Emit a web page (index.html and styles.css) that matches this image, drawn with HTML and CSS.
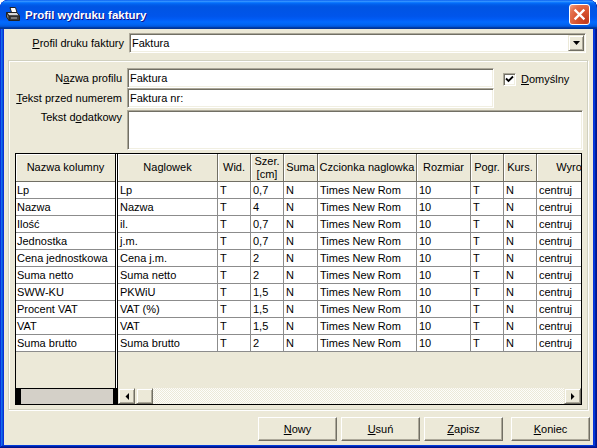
FILE: index.html
```html
<!DOCTYPE html>
<html lang="pl">
<head>
<meta charset="utf-8">
<title>Profil wydruku faktury</title>
<link rel="stylesheet" href="styles.css">
</head>
<body>
<div class="window">
  <div class="titlebar">
    <svg class="title-icon" width="16" height="16" viewBox="0 0 16 16">
      <polygon points="5,0.5 10.5,0.5 12,5.5 6.5,5.5" fill="#fff" stroke="#222" stroke-width="1"/>
      <polygon points="1.5,5.5 12,5.5 14.5,9 4,9" fill="#d8d8d8" stroke="#222" stroke-width="1"/>
      <polygon points="4,9 14.5,9 14.5,13.5 4,13.5" fill="#3a3a3a" stroke="#222" stroke-width="1"/>
      <polygon points="1.5,5.5 4,9 4,13.5 1.5,10" fill="#777" stroke="#222" stroke-width="1"/>
      <rect x="6" y="10.5" width="6" height="1" fill="#bbb"/>
    </svg>
    <span class="title-text">Profil wydruku faktury</span>
    <div class="close-btn">
      <svg width="19" height="19" viewBox="0 0 19 19">
        <path d="M5.5 5.5 L13.5 13.5 M13.5 5.5 L5.5 13.5" stroke="#fff" stroke-width="2.4" stroke-linecap="square"/>
      </svg>
    </div>
  </div>

  <div class="client">
    <div class="profile-row">
      <label class="profile-label"><u>P</u>rofil druku faktury</label>
      <div class="combo">
        <span class="combo-text">Faktura</span>
        <span class="combo-btn">
          <svg width="7" height="4" viewBox="0 0 7 4"><polygon points="0,0 7,0 3.5,4" fill="#000"/></svg>
        </span>
      </div>
    </div>

    <div class="group">
      <div class="form-row">
        <label class="flabel">N<u>a</u>zwa profilu</label>
        <div class="input input-short">Faktura</div>
        <div class="check">
          <span class="check-box">
            <svg width="9" height="9" viewBox="0 0 9 9"><path d="M1 3.5 L3.5 6 L8 1.5" fill="none" stroke="#000" stroke-width="1.8"/></svg>
          </span>
          <span><u>D</u>omyślny</span>
        </div>
      </div>
      <div class="form-row">
        <label class="flabel"><u>T</u>ekst przed numerem</label>
        <div class="input input-short">Faktura nr:</div>
      </div>
      <div class="form-row form-row-tall">
        <label class="flabel flabel-top">Tekst d<u>o</u>datkowy</label>
        <div class="input input-area"></div>
      </div>

      <div class="grid">
        <div class="grid-body">
          <div class="fixed-col">
            <div class="h fh">Nazwa kolumny</div>
            <div class="c fc">Lp</div>
            <div class="c fc">Nazwa</div>
            <div class="c fc">Ilość</div>
            <div class="c fc">Jednostka</div>
            <div class="c fc">Cena jednostkowa</div>
            <div class="c fc">Suma netto</div>
            <div class="c fc">SWW-KU</div>
            <div class="c fc">Procent VAT</div>
            <div class="c fc">VAT</div>
            <div class="c fc">Suma brutto</div>
            <div class="filler"></div>
          </div>
          <div class="divider"></div>
          <div class="scroll-area">
            <div class="cols">
              <div class="h">Naglowek</div>
              <div class="h">Wid.</div>
              <div class="h">Szer.<br>[cm]</div>
              <div class="h">Suma</div>
              <div class="h">Czcionka naglowka</div>
              <div class="h">Rozmiar</div>
              <div class="h">Pogr.</div>
              <div class="h">Kurs.</div>
              <div class="h">Wyrownanie</div>

              <div class="c">Lp</div><div class="c">T</div><div class="c">0,7</div><div class="c">N</div><div class="c">Times New Rom</div><div class="c">10</div><div class="c">T</div><div class="c">N</div><div class="c">centruj</div>
              <div class="c">Nazwa</div><div class="c">T</div><div class="c">4</div><div class="c">N</div><div class="c">Times New Rom</div><div class="c">10</div><div class="c">T</div><div class="c">N</div><div class="c">centruj</div>
              <div class="c">il.</div><div class="c">T</div><div class="c">0,7</div><div class="c">N</div><div class="c">Times New Rom</div><div class="c">10</div><div class="c">T</div><div class="c">N</div><div class="c">centruj</div>
              <div class="c">j.m.</div><div class="c">T</div><div class="c">0,7</div><div class="c">N</div><div class="c">Times New Rom</div><div class="c">10</div><div class="c">T</div><div class="c">N</div><div class="c">centruj</div>
              <div class="c">Cena j.m.</div><div class="c">T</div><div class="c">2</div><div class="c">N</div><div class="c">Times New Rom</div><div class="c">10</div><div class="c">T</div><div class="c">N</div><div class="c">centruj</div>
              <div class="c">Suma netto</div><div class="c">T</div><div class="c">2</div><div class="c">N</div><div class="c">Times New Rom</div><div class="c">10</div><div class="c">T</div><div class="c">N</div><div class="c">centruj</div>
              <div class="c">PKWiU</div><div class="c">T</div><div class="c">1,5</div><div class="c">N</div><div class="c">Times New Rom</div><div class="c">10</div><div class="c">T</div><div class="c">N</div><div class="c">centruj</div>
              <div class="c">VAT (%)</div><div class="c">T</div><div class="c">1,5</div><div class="c">N</div><div class="c">Times New Rom</div><div class="c">10</div><div class="c">T</div><div class="c">N</div><div class="c">centruj</div>
              <div class="c">VAT</div><div class="c">T</div><div class="c">1,5</div><div class="c">N</div><div class="c">Times New Rom</div><div class="c">10</div><div class="c">T</div><div class="c">N</div><div class="c">centruj</div>
              <div class="c">Suma brutto</div><div class="c">T</div><div class="c">2</div><div class="c">N</div><div class="c">Times New Rom</div><div class="c">10</div><div class="c">T</div><div class="c">N</div><div class="c">centruj</div>
            </div>
          </div>
        </div>
        <div class="hscroll">
          <div class="corner"></div>
          <div class="sbar">
            <span class="sbtn">
              <svg width="4" height="7" viewBox="0 0 4 7"><polygon points="4,0 4,7 0.5,3.5" fill="#000"/></svg>
            </span>
            <span class="sbtn sthumb"></span>
            <span class="strack"></span>
            <span class="sbtn">
              <svg width="4" height="7" viewBox="0 0 4 7"><polygon points="0,0 0,7 3.5,3.5" fill="#000"/></svg>
            </span>
          </div>
        </div>
      </div>
    </div>

    <div class="buttons">
      <div class="btn"><u>N</u>owy</div>
      <div class="btn"><u>U</u>suń</div>
      <div class="btn"><u>Z</u>apisz</div>
      <div class="btn btn-last"><u>K</u>oniec</div>
    </div>
  </div>
</div>
</body>
</html>
```

FILE: styles.css
```css
* { box-sizing: border-box; }
html, body { margin: 0; padding: 0; }
body {
  width: 597px;
  height: 448px;
  overflow: hidden;
  background: #fff;
  font-family: "Liberation Sans", Arial, sans-serif;
  font-size: 11px;
  color: #000;
}
u { text-decoration: underline; }

.window {
  width: 597px;
  height: 448px;
  display: flex;
  flex-direction: column;
  background: #0831d9;
  border-radius: 8px 8px 0 0;
  overflow: hidden;
  box-shadow: inset -1px -1px #00138c, inset 1px 1px #0831d9,
              inset -2px -2px #001ea0, inset 2px 2px #166aee,
              inset -3px -3px #003bda, inset 3px 3px #0855dd;
}

.titlebar {
  height: 29px;
  flex: 0 0 29px;
  display: flex;
  align-items: center;
  padding: 0 7px 0 5px;
  border-radius: 8px 8px 0 0;
  background: linear-gradient(to bottom,
    #0058ee 0%, #3a93ff 4%, #288eff 6%, #127dff 8%, #036ffc 10%,
    #0262ee 14%, #0057e5 20%, #0054e3 24%, #0055eb 56%, #005bf5 66%,
    #026afe 76%, #0062ef 86%, #0052d6 92%, #0040ab 94%, #003092 100%);
}
.title-icon { flex: 0 0 16px; margin-top: 1px; }
.title-text {
  margin-left: 4px;
  color: #fff;
  font-weight: bold;
  font-size: 11.5px;
  text-shadow: 1px 1px #0f1089;
  flex: 1;
}
.close-btn {
  width: 21px;
  height: 21px;
  border: 1px solid #fff;
  border-radius: 3px;
  display: flex;
  align-items: center;
  justify-content: center;
  background: radial-gradient(circle at 85% 85%, #c13a1c 0%, #d9542f 45%, #e4704d 75%, #f2a488 100%);
}

.client {
  flex: 1;
  margin: 0 4px 3px 4px;
  background: #ece9d8;
  padding: 4px 3px 4px 4px;
  display: flex;
  flex-direction: column;
}

.profile-row {
  display: flex;
  height: 20px;
  align-items: center;
}
.profile-label {
  width: 116px;
  text-align: right;
}
.combo {
  flex: 1;
  margin-left: 5px;
  margin-right: 4px;
  height: 20px;
  background: #fff;
  border: 1px solid;
  border-color: #aca899 #fff #fff #aca899;
  box-shadow: inset 1px 1px #716f64, inset -1px -1px #f1efe2;
  padding: 1px;
  display: flex;
}
.combo-text {
  flex: 1;
  padding-left: 1px;
  line-height: 16px;
}
.combo-btn {
  width: 16px;
  height: 16px;
  background: #ece9d8;
  border: 1px solid;
  border-color: #ece9d8 #716f64 #716f64 #ece9d8;
  box-shadow: inset 1px 1px #fff, inset -1px -1px #aca899;
  display: flex;
  align-items: center;
  justify-content: center;
}

.group {
  margin-top: 7px;
  margin-right: 2px;
  height: 350px;
  border: 1px solid #d0d0bf;
  box-shadow: inset 1px 1px #fff, 1px 1px #fff;
  padding-top: 7px;
  display: flex;
  flex-direction: column;
}
.form-row {
  display: flex;
  align-items: center;
  height: 20px;
}
.form-row-tall {
  height: 40px;
  margin-top: 2px;
  align-items: flex-start;
}
.flabel {
  width: 113px;
  text-align: right;
  margin-right: 5px;
}
.flabel-top { padding-top: 1px; line-height: 13px; }
.input {
  height: 20px;
  background: #fff;
  border: 1px solid;
  border-color: #aca899 #fff #fff #aca899;
  box-shadow: inset 1px 1px #716f64, inset -1px -1px #f1efe2;
  padding: 1px 2px;
  line-height: 16px;
  white-space: nowrap;
}
.input-short { width: 367px; }
.input-area { width: 456px; height: 40px; }

.check {
  display: flex;
  align-items: center;
  margin-left: 9px;
  margin-top: 2px;
}
.check-box {
  width: 13px;
  height: 13px;
  background: #fff;
  border: 1px solid;
  border-color: #aca899 #fff #fff #aca899;
  box-shadow: inset 1px 1px #716f64, inset -1px -1px #f1efe2;
  display: flex;
  align-items: center;
  justify-content: center;
  margin-right: 5px;
}

.grid {
  margin-top: 3px;
  margin-left: 6px;
  width: 567px;
  height: 252px;
  border: 1px solid #000;
  background: #ece9d8;
  display: flex;
  flex-direction: column;
  overflow: hidden;
}
.grid-body {
  flex: 1;
  display: flex;
  min-height: 0;
}
.fixed-col {
  width: 99px;
  flex: 0 0 99px;
  display: flex;
  flex-direction: column;
}
.filler { flex: 1; background: #ece9d8; }
.divider {
  flex: 0 0 3px;
  border-left: 1px solid #000;
  border-right: 1px solid #000;
  background: #fff;
}
.scroll-area {
  flex: 1;
  overflow: hidden;
}
.cols {
  display: grid;
  grid-template-columns: 100px 33px 33px 34px 99px 54px 33px 33px 100px;
  grid-template-rows: 28px repeat(10, 17px);
  width: 519px;
}
.h {
  height: 28px;
  background: #ece9d8;
  border-right: 1px solid #716f64;
  border-bottom: 1px solid #716f64;
  box-shadow: inset 1px 1px #fff;
  display: flex;
  align-items: center;
  justify-content: center;
  text-align: center;
  line-height: 13px;
  white-space: nowrap;
  overflow: hidden;
}
.fh { border-right: none; }
.c {
  height: 17px;
  background: #fff;
  border-right: 1px solid #8c8c8c;
  border-bottom: 1px solid #8c8c8c;
  padding-left: 2px;
  line-height: 16px;
  white-space: nowrap;
  overflow: hidden;
}
.fc { border-right: none; padding-left: 1px; }

.hscroll {
  height: 16px;
  flex: 0 0 16px;
  display: flex;
}
.corner {
  width: 102px;
  flex: 0 0 102px;
  background: #d4d0c8;
  border-top: 1px solid #000;
  border-left: 5px solid #000;
  border-right: 5px solid #000;
}
.sbar {
  flex: 1;
  display: flex;
}
.sbtn {
  width: 17px;
  flex: 0 0 17px;
  height: 16px;
  background: #ece9d8;
  border: 1px solid;
  border-color: #ece9d8 #716f64 #716f64 #ece9d8;
  box-shadow: inset 1px 1px #fff, inset -1px -1px #aca899;
  display: flex;
  align-items: center;
  justify-content: center;
}
.sthumb { margin-left: 1px; }
.strack {
  flex: 1;
  background: repeating-conic-gradient(#ece9d8 0 25%, #fdfdfb 0 50%) 0 0 / 2px 2px;
}

.buttons {
  margin-top: 7px;
  height: 24px;
  display: flex;
  justify-content: flex-end;
  gap: 4px;
}
.btn {
  width: 79px;
  height: 24px;
  background: #ece9d8;
  border: 1px solid;
  border-color: #fff #716f64 #716f64 #fff;
  box-shadow: inset -1px -1px #aca899;
  display: flex;
  align-items: center;
  justify-content: center;
}
.btn-last { margin-left: 4px; }
```
